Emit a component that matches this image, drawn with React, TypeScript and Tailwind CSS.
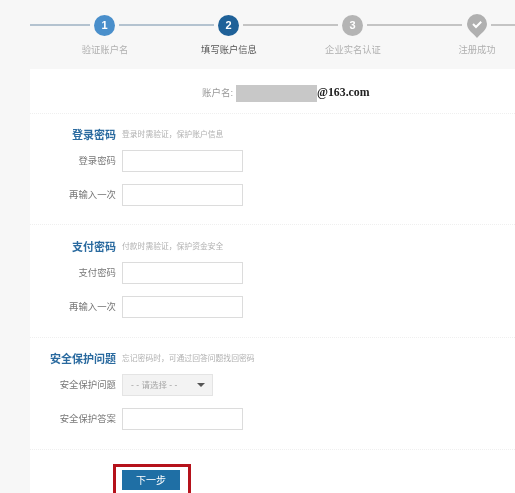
import React from "react";

const font = { fontFamily: '"Liberation Sans","Noto Sans CJK SC",sans-serif' };

function Line({ w, color }: { w: string; color: string }) {
  return <div className={`h-[1.5px] ${w} ${color}`} />;
}

function Circle({ n, cls }: { n: string; cls: string }) {
  return (
    <div className={`w-[21px] h-[21px] rounded-full flex items-center justify-center text-white text-[11px] font-bold ${cls}`}>
      {n}
    </div>
  );
}

function Stepper() {
  return (
    <div className="h-[69px] overflow-hidden">
      <div className="flex items-center pt-[14px] pl-[30px] w-[560px] h-[36px]">
        <Line w="w-[60px]" color="bg-[#b4c3d0]" />
        <div className="mx-[4px]"><Circle n="1" cls="bg-[#4a8fcb]" /></div>
        <Line w="w-[95px]" color="bg-[#b4c3d0]" />
        <div className="mx-[4px]"><Circle n="2" cls="bg-[#1f6198]" /></div>
        <Line w="w-[95px]" color="bg-[#c4c4c4]" />
        <div className="mx-[4px]"><Circle n="3" cls="bg-[#b4b4b4]" /></div>
        <Line w="w-[95px]" color="bg-[#c4c4c4]" />
        <div className="mx-[4px] w-[21px] h-[24px] mt-[2px] flex justify-center">
          <svg viewBox="0 0 20 24" className="w-[20px] h-[24px]">
            <path d="M10 0a10 10 0 0 1 10 10c0 6-6 9-10 14C6 19 0 16 0 10A10 10 0 0 1 10 0z" fill="#b0b0b0" />
            <path d="M6 10l3 3 5.2-5.2" fill="none" stroke="#fff" strokeWidth="2" />
          </svg>
        </div>
        <Line w="w-[40px]" color="bg-[#c4c4c4]" />
      </div>
      <div className="flex pl-[43px] w-[560px] mt-[7px] text-[9.3px] leading-[14px]">
        <div className="w-[124px] text-center text-[#b0b0b0]">验证账户名</div>
        <div className="w-[124px] text-center text-[#555]">填写账户信息</div>
        <div className="w-[124px] text-center text-[#b0b0b0]">企业实名认证</div>
        <div className="w-[124px] text-center text-[#b0b0b0]">注册成功</div>
      </div>
    </div>
  );
}

function SectionTitle({ title, hint }: { title: string; hint: string }) {
  return (
    <div className="flex items-center h-[14px]">
      <div className="w-[86px] text-right text-[11px] font-bold text-[#2a6a9f] whitespace-nowrap">{title}</div>
      <div className="ml-[6px] text-[7.8px] text-[#b0b0b0] whitespace-nowrap">{hint}</div>
    </div>
  );
}

function Field({ label }: { label: string }) {
  return (
    <div className="flex items-center h-[22px]">
      <div className="w-[86px] text-right text-[9.4px] text-[#777] whitespace-nowrap">{label}</div>
      <div className="ml-[6px] w-[121px] h-[22px] bg-white border border-[#dcdcdc]" />
    </div>
  );
}

function Divider({ cls }: { cls: string }) {
  return <div className={`border-t border-dotted border-[#efefef] ${cls}`} />;
}

export default function App() {
  return (
    <div className="w-[515px] h-[493px] overflow-hidden bg-[#f7f7f7] blur-[0.5px]" style={font}>
      <Stepper />
      <div className="ml-[30px] h-[424px] bg-white overflow-hidden">
        <div className="flex items-center h-[18px] mt-[15px] pl-[172px]">
          <span className="text-[9.5px] text-[#999] w-[34px] whitespace-nowrap">账户名:</span>
          <div className="w-[81px] h-[17px] bg-[#c8c8c8]" />
          <span className="text-[11.8px] font-bold text-[#222]" style={{ fontFamily: '"Liberation Serif",serif' }}>@163.com</span>
        </div>
        <Divider cls="mt-[11px]" />
        <div className="mt-[14px]"><SectionTitle title="登录密码" hint="登录时需验证，保护账户信息" /></div>
        <div className="mt-[8px]"><Field label="登录密码" /></div>
        <div className="mt-[12px]"><Field label="再输入一次" /></div>
        <Divider cls="mt-[18px]" />
        <div className="mt-[15px]"><SectionTitle title="支付密码" hint="付款时需验证，保护资金安全" /></div>
        <div className="mt-[8px]"><Field label="支付密码" /></div>
        <div className="mt-[12px]"><Field label="再输入一次" /></div>
        <Divider cls="mt-[19px]" />
        <div className="mt-[14px]"><SectionTitle title="安全保护问题" hint="忘记密码时，可通过回答问题找回密码" /></div>
        <div className="mt-[8px] flex items-center h-[22px]">
          <div className="w-[86px] text-right text-[9.4px] text-[#777] whitespace-nowrap">安全保护问题</div>
          <div className="ml-[6px] w-[91px] h-[22px] bg-[#f3f3f3] border border-[#e4e4e4] flex items-center justify-between pl-[8px] pr-[7px]">
            <span className="text-[8.5px] text-[#a5a5a5] whitespace-nowrap">- - 请选择 - -</span>
            <span className="w-0 h-0 border-l-[4px] border-r-[4px] border-t-[4px] border-l-transparent border-r-transparent border-t-[#555]" />
          </div>
        </div>
        <div className="mt-[12px]"><Field label="安全保护答案" /></div>
        <Divider cls="mt-[19px]" />
        <div className="ml-[83px] mt-[14px] w-[78px] h-[40px] border-[3px] border-[#b5121b] pt-[3px] pl-[6px]">
          <div className="w-[58px] h-[20px] bg-[#1f6fa5] text-white text-[10px] flex items-center justify-center">下一步</div>
        </div>
      </div>
    </div>
  );
}
